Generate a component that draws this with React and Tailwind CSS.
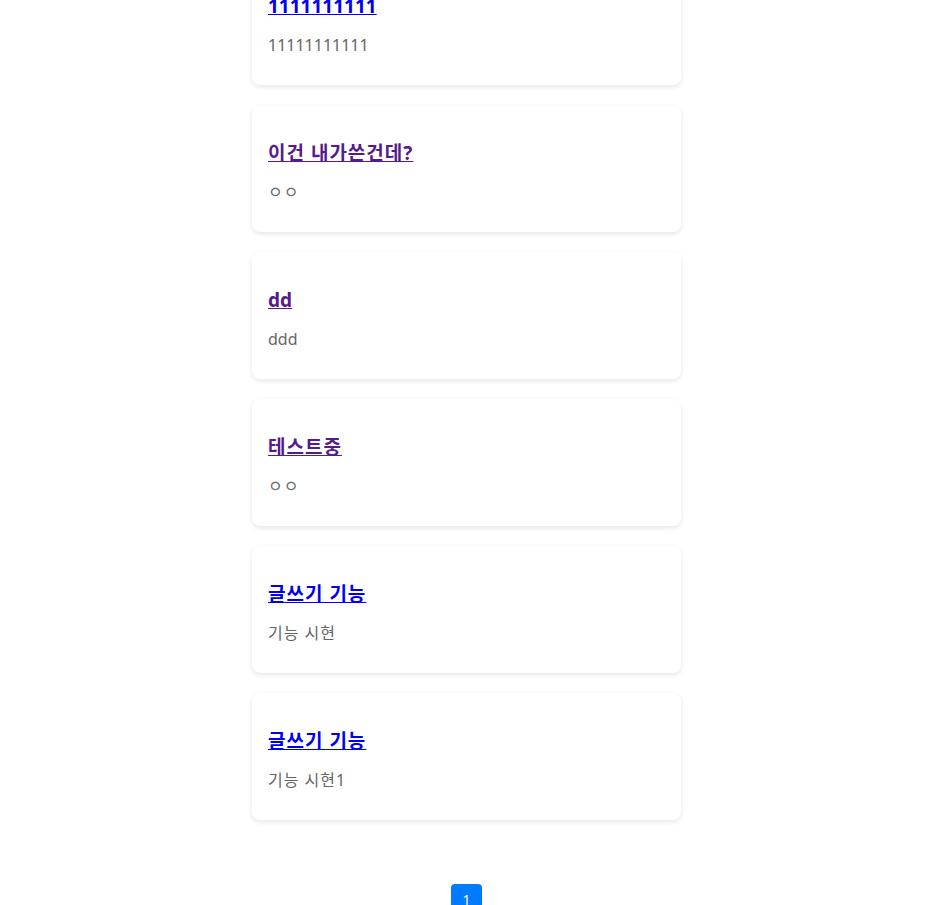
import React from 'react';

const posts = [
  { title: '1111111111', body: '11111111111', visited: false, ko: false },
  { title: '이건 내가쓴건데?', body: 'ㅇㅇ', visited: true, ko: true },
  { title: 'dd', body: 'ddd', visited: true, ko: false },
  { title: '테스트중', body: 'ㅇㅇ', visited: true, ko: true },
  { title: '글쓰기 기능', body: '기능 시현', visited: false, ko: true },
  { title: '글쓰기 기능', body: '기능 시현1', visited: false, ko: true },
];

function PostCard({ post }) {
  return (
    <div className="w-[429px] rounded-lg bg-white px-4 pt-4 pb-4 shadow-[0_2px_5px_rgba(0,0,0,0.1)]">
      <h3 className={`mt-[17px] text-[19px] font-bold leading-[30px] ${post.ko ? 'tracking-[1px]' : ''}`}>
        <a
          href="#"
          className={`underline ${post.visited ? 'text-[#551a8b]' : 'text-[#0000ee]'}`}
        >
          {post.title}
        </a>
      </h3>
      <p className={`mt-[12px] mb-[12px] text-base leading-6 text-[#666] ${post.ko ? 'tracking-[1px]' : ''}`}>
        {post.body}
      </p>
    </div>
  );
}

export default function App() {
  return (
    <div
      className="min-h-screen overflow-hidden bg-white"
      style={{ fontFamily: '"Noto Sans", "Noto Sans CJK KR", sans-serif' }}
    >
      <div className="-mt-[42px] flex flex-col items-center gap-5 pr-1">
        {posts.map((post, i) => (
          <PostCard key={i} post={post} />
        ))}
        <div className="mt-[44px] flex justify-center">
          <button className="h-8 w-[31px] rounded bg-[#007bff] text-sm leading-8 text-white">1</button>
        </div>
      </div>
    </div>
  );
}
